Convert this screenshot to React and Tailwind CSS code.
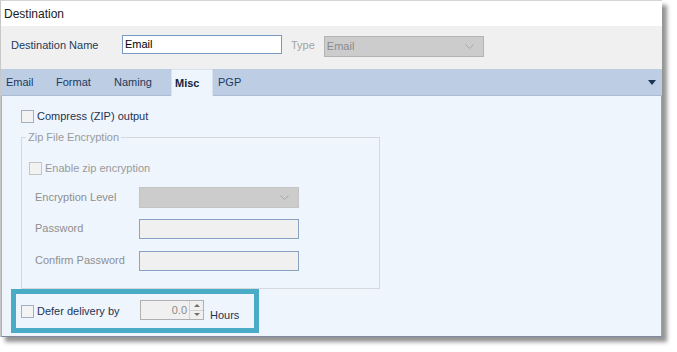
const font = { fontFamily: '"Liberation Sans", Arial, sans-serif' };

function Check({ disabled }) {
  return (
    <span
      className={
        "inline-block w-[13px] h-[13px] border shrink-0 " +
        (disabled ? "border-[#c4c4c4] bg-[#f2f2f2]" : "border-[#a3afc0] bg-[#f3f3f3]")
      }
    />
  );
}

function Chevron({ className }) {
  return (
    <svg width="9" height="5" viewBox="0 0 9 5" className={className}>
      <polyline points="0.5,0.5 4.5,4.5 8.5,0.5" fill="none" stroke="#a8a8a8" strokeWidth="1" />
    </svg>
  );
}

const tabs = [
  { name: "Email", w: "w-[55px] pl-[5px]" },
  { name: "Format", w: "w-[58px]" },
  { name: "Naming", w: "w-[57px]" },
];

export default function App() {
  return (
    <div className="w-[677px] h-[352px] bg-white overflow-hidden text-[11px]" style={font}>
      <div className="w-[662px] h-[337px] flex flex-col border-t border-[#d4d4d4] border-l border-l-[#c8c8c8] shadow-[5px_5px_4px_rgba(60,60,60,0.55)]">
        <div className="h-[25px] bg-white flex items-center pl-[3px] text-[12px] text-[#1b1b1b]">
          Destination
        </div>

        <div className="h-[43px] bg-[#f0f0f0] flex items-start pt-[9px] pl-[10px] leading-[13px]">
          <span className="w-[111px] mt-[4px] text-[#1e3a5c]">Destination Name</span>
          <div className="w-[160px] h-[19px] bg-white border border-[#7a99c0] pl-[2px] flex items-center text-black">
            Email
          </div>
          <span className="ml-[9px] mt-[4px] text-[#a3a3a3]">Type</span>
          <div className="ml-[9px] mt-[1px] w-[160px] h-[21px] bg-[#cccccc] border border-[#b4b4b4] flex items-center pl-[2px] pr-[9px] text-[#8a8a8a]">
            <span className="flex-1">Email</span>
            <Chevron />
          </div>
        </div>

        <div className="h-[27px] bg-[#bccde4] flex items-end border-b border-[#a9bdd6] text-[#1e3a5c]">
          {tabs.map((t) => (
            <div key={t.name} className={"h-[26px] flex items-center " + t.w}>
              {t.name}
            </div>
          ))}
          <div className="w-[42px] h-[27px] -mb-px bg-[#eef5fd] border border-b-0 border-[#d9e3ef] rounded-t-[2px] flex items-center pl-[3px] font-bold text-[#15253b]">
            Misc
          </div>
          <div className="h-[26px] flex items-center ml-[5px]">PGP</div>
          <div className="flex-1" />
          <div className="h-[26px] flex items-center pr-[6px]">
            <span className="w-0 h-0 border-l-[4px] border-r-[4px] border-t-[5px] border-l-transparent border-r-transparent border-t-[#1e3453]" />
          </div>
        </div>

        <div className="flex-1 bg-[#eef5fd] border-l border-r border-b border-l-[#9fb1c7] border-r-[#8ea1ba] border-b-[#7e8aa0] pt-[14px] pl-[19px] flex flex-col items-start">
          <div className="flex items-center gap-[3px] h-[13px] text-[#1f3350]">
            <Check />
            <span>Compress (ZIP) output</span>
          </div>

          <fieldset className="mt-[8px] w-[359px] h-[158px] border border-[#d5d9de] pl-[7px] pr-[7px]">
            <legend className="px-[2px] -ml-[3px] text-[#9a9a9a] leading-[13px]">Zip File Encryption</legend>
            <div className="mt-[16px] flex items-center gap-[3px] text-[#9a9a9a]">
              <Check disabled />
              <span>Enable zip encryption</span>
            </div>
            <div className="mt-[10px] pl-[6px] flex flex-col gap-[11px] text-[#8f8f8f]">
              <div className="flex items-center">
                <span className="w-[104px]">Encryption Level</span>
                <div className="w-[160px] h-[21px] bg-[#cccccc] border border-[#c4c4c4] flex items-center justify-end pr-[9px]">
                  <Chevron />
                </div>
              </div>
              <div className="flex items-center">
                <span className="w-[104px]">Password</span>
                <div className="w-[160px] h-[20px] bg-[#f0f0f0] border border-[#8aa3c4]" />
              </div>
              <div className="flex items-center mt-px">
                <span className="w-[104px]">Confirm Password</span>
                <div className="w-[160px] h-[20px] bg-[#f0f0f0] border border-[#8aa3c4]" />
              </div>
            </div>
          </fieldset>

          <div className="-ml-[10px] w-[248px] h-[44px] border-[5px] border-[#4aabc6] flex items-start pl-[5px] pt-[6px]">
            <div className="flex items-center gap-[3px] mt-[3px] text-[#1f3350] w-[119px]">
              <Check />
              <span>Defer delivery by</span>
            </div>
            <div className="w-[64px] h-[20px] bg-[#f0f0f0] border border-[#b0b0b0] flex items-stretch">
              <span className="flex-1 flex items-center justify-end pr-[2px] text-[#8a8a8a]">0.0</span>
              <div className="w-[14px] flex flex-col border-l border-[#d0d0d0]">
                <div className="flex-1 flex items-center justify-center border-b border-[#d0d0d0]">
                  <span className="w-0 h-0 border-l-[3px] border-r-[3px] border-b-[3px] border-l-transparent border-r-transparent border-b-[#707070]" />
                </div>
                <div className="flex-1 flex items-center justify-center">
                  <span className="w-0 h-0 border-l-[3px] border-r-[3px] border-t-[3px] border-l-transparent border-r-transparent border-t-[#707070]" />
                </div>
              </div>
            </div>
            <span className="ml-[6px] mt-[7px] text-[#1f3350]">Hours</span>
          </div>
        </div>
      </div>
    </div>
  );
}
